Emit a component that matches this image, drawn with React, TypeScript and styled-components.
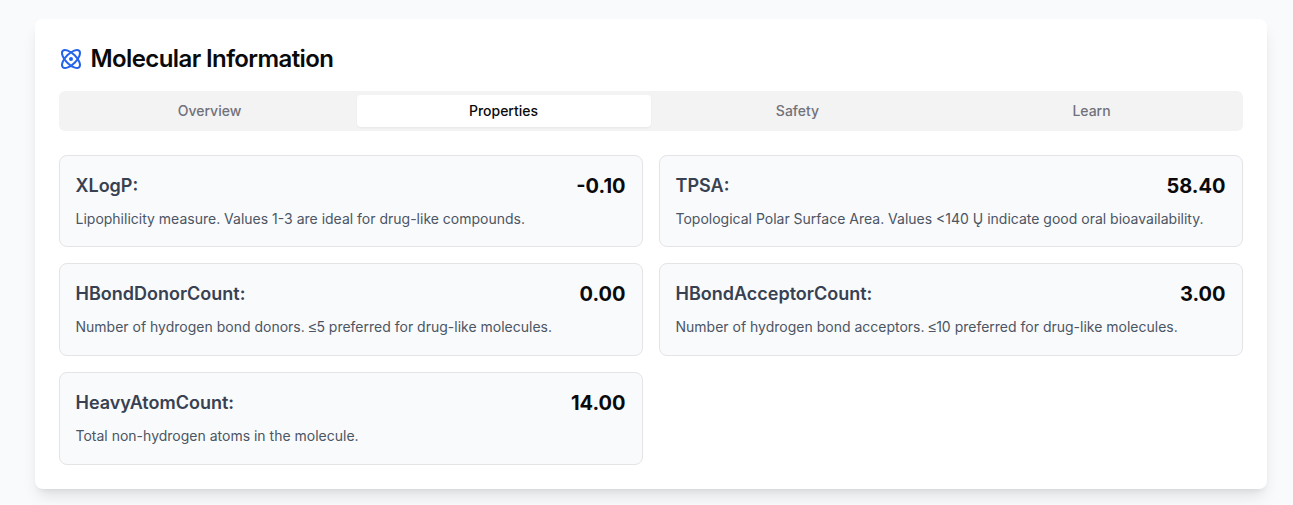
import React from "react";
import styled, { createGlobalStyle } from "styled-components";
import { Atom } from "lucide-react";

const GlobalStyle = createGlobalStyle`
  * { box-sizing: border-box; margin: 0; }
  body {
    margin: 0;
    background: #f9fafc;
    font-family: Inter, "Liberation Sans", sans-serif;
    color: #0a0a0a;
    overflow: hidden;
  }
`;

const Page = styled.main`
  height: 505px;
  padding: 18.6px 26.5px 0 34.5px;
`;

const Card = styled.section`
  height: 470.25px;
  padding: 24px;
  background: #fff;
  border-radius: 8px;
  box-shadow: 0 10px 15px -3px rgba(0, 0, 0, 0.1), 0 4px 6px -4px rgba(0, 0, 0, 0.1);
`;

const Title = styled.h2`
  display: flex;
  align-items: center;
  gap: 8px;
  height: 32px;
  font-size: 24px;
  line-height: 32px;
  font-weight: 600;
  letter-spacing: -0.6px;

  svg { color: #2563eb; }
`;

const TabList = styled.div`
  display: grid;
  grid-template-columns: repeat(4, 1fr);
  height: 40px;
  margin-top: 16px;
  padding: 4px;
  border-radius: 6px;
  background: #f3f3f3;
`;

const Tab = styled.button<{ $active?: boolean }>`
  border: 0;
  border-radius: 4px;
  font: 500 14px/20px Inter, sans-serif;
  color: ${(p) => (p.$active ? "#0a0a0a" : "#71717a")};
  background: ${(p) => (p.$active ? "#fff" : "transparent")};
  box-shadow: ${(p) => (p.$active ? "0 1px 2px rgba(0, 0, 0, 0.05)" : "none")};
`;

const Grid = styled.div`
  display: grid;
  grid-template-columns: repeat(2, 1fr);
  gap: 16px;
  margin-top: 24px;
`;

const PropertyCard = styled.article`
  height: 92.75px;
  padding: 16px;
  border: 1px solid #e4e4e7;
  border-radius: 8px;
  background: #f9fafc;
`;

const PropertyHead = styled.div`
  display: flex;
  align-items: center;
  justify-content: space-between;
  height: 28px;
  margin-bottom: 8px;
`;

const Name = styled.span`
  font-size: 18px;
  line-height: 28px;
  font-weight: 600;
  color: #374151;
`;

const Value = styled.span`
  font-size: 20px;
  line-height: 28px;
  font-weight: 700;
`;

const Description = styled.p`
  font-size: 14px;
  line-height: 22.75px;
  color: #4b5563;
`;

const MathSign = styled.span`
  font-family: "Liberation Sans", sans-serif;
  line-height: 1;
`;

const tabs = ["Overview", "Properties", "Safety", "Learn"];

const properties = [
  { name: "XLogP", value: "-0.10", text: "Lipophilicity measure. Values 1-3 are ideal for drug-like compounds." },
  { name: "TPSA", value: "58.40", text: "Topological Polar Surface Area. Values <140 Ų indicate good oral bioavailability." },
  { name: "HBondDonorCount", value: "0.00", text: <>Number of hydrogen bond donors. <MathSign>≤</MathSign>5 preferred for drug-like molecules.</> },
  { name: "HBondAcceptorCount", value: "3.00", text: <>Number of hydrogen bond acceptors. <MathSign>≤</MathSign>10 preferred for drug-like molecules.</> },
  { name: "HeavyAtomCount", value: "14.00", text: "Total non-hydrogen atoms in the molecule." },
];

export default function App() {
  return (
    <>
      <GlobalStyle />
      <Page>
        <Card>
          <Title>
            <Atom size={24} />
            Molecular Information
          </Title>
          <TabList role="tablist">
            {tabs.map((t) => (
              <Tab key={t} role="tab" $active={t === "Properties"}>{t}</Tab>
            ))}
          </TabList>
          <Grid>
            {properties.map((p) => (
              <PropertyCard key={p.name}>
                <PropertyHead>
                  <Name>{p.name}:</Name>
                  <Value>{p.value}</Value>
                </PropertyHead>
                <Description>{p.text}</Description>
              </PropertyCard>
            ))}
          </Grid>
        </Card>
      </Page>
    </>
  );
}
